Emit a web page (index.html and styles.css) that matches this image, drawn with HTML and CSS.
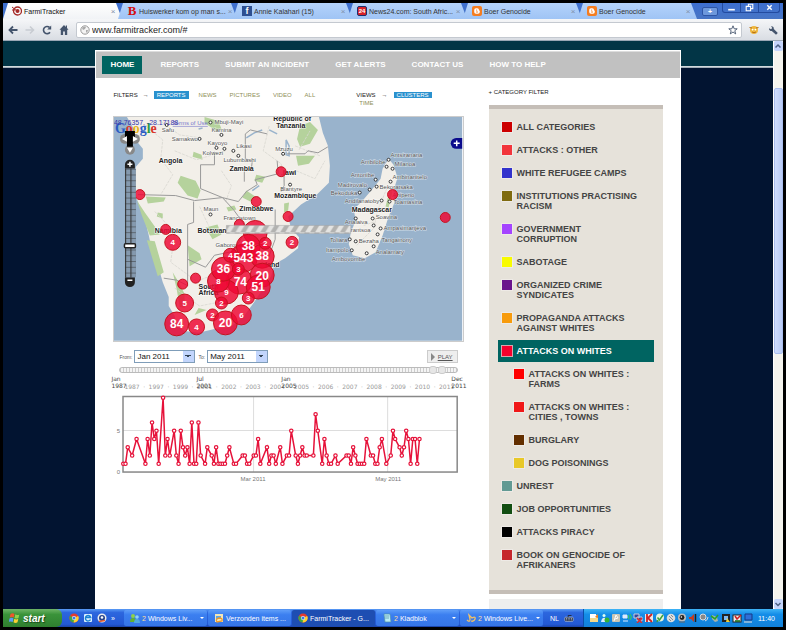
FILE: index.html
```html
<!DOCTYPE html>
<html lang="en">
<head>
<meta charset="utf-8">
<title>FarmiTracker</title>
<link rel="stylesheet" href="styles.css">
</head>
<body>
<svg class="defs" aria-hidden="true">
  <symbol id="chrome" viewBox="0 0 10 10"><circle cx="5" cy="5" r="4.6" fill="#e33b2e"/><path d="M5 5 1 2.8A4.6 4.6 0 0 0 4.7 9.6L7 6z" fill="#3fa648"/><path d="M5 5 9.2 3A4.6 4.6 0 0 1 4.7 9.6z" fill="#fbd232"/><circle cx="5" cy="5" r="2.1" fill="#fff"/><circle cx="5" cy="5" r="1.6" fill="#3b7de0"/></symbol>
  <symbol id="blogger" viewBox="0 0 10 10"><rect width="10" height="10" rx="2" fill="#f57d20"/><path d="M2.200 4A1.800 1.800 0 0 1 4 2.200h1.200A1.800 1.800 0 0 1 7 4q0 .7.8.8V6A1.800 1.800 0 0 1 6 7.800H4A1.800 1.800 0 0 1 2.200 6z" fill="#fff"/><path d="M4 4.100h1.200M4 6h2" stroke="#f57d20" stroke-width=".9"/></symbol>
  <symbol id="people" viewBox="0 0 10 10"><circle cx="3" cy="3" r="2" fill="#8fd14a"/><path d="M0 9q0-4 3-4t3 4z" fill="#62b22f"/><circle cx="7" cy="4" r="1.800" fill="#8fd4f5"/><path d="M4 10q0-4 3-4t3 4z" fill="#50a8df"/></symbol>
</svg>

<header class="browser">
  <div class="tabstrip">
    <div class="tab active">
      <svg class="fav" viewBox="0 0 10 10"><circle cx="5.500" cy="5" r="4" fill="none" stroke="#a52a28" stroke-width="1.300"/><circle cx="5.500" cy="5" r="2" fill="#a52a28"/><path d="M0 1l5 4M0 4h3" stroke="#a52a28"/></svg>
      <span class="tab-title">FarmiTracker</span><button class="x" aria-label="Close tab">×</button></div>
    <div class="tab"><span class="fav fav-b">B</span><span class="tab-title">Huiswerker kom op man s...</span><button class="x" aria-label="Close tab">×</button></div>
    <div class="tab"><span class="fav fav-f">f</span><span class="tab-title">Annie Kalahari (15)</span><button class="x" aria-label="Close tab">×</button></div>
    <div class="tab"><span class="fav fav-24">24</span><span class="tab-title">News24.com: South Afric...</span><button class="x" aria-label="Close tab">×</button></div>
    <div class="tab"><svg class="fav"><use href="#blogger"/></svg><span class="tab-title">Boer Genocide</span><button class="x" aria-label="Close tab">×</button></div>
    <div class="tab"><svg class="fav"><use href="#blogger"/></svg><span class="tab-title">Boer Genocide</span><button class="x" aria-label="Close tab">×</button></div>
    <button class="newtab" aria-label="New tab">+</button>
    <div class="winctl">
      <button aria-label="Minimise"><svg viewBox="0 0 10 8"><path d="M2 6h6" stroke="#fff" stroke-width="1.500"/></svg></button>
      <button aria-label="Restore"><svg viewBox="0 0 10 8"><path d="M4 2.500v-1.500h4v4H6.500M2 3h4v4H2z" stroke="#fff" fill="none"/></svg></button>
      <button aria-label="Close"><svg viewBox="0 0 10 8"><path d="M3 2l4 4M7 2l-4 4" stroke="#fff" stroke-width="1.300"/></svg></button>
    </div>
  </div>
  <div class="toolbar">
    <button aria-label="Back"><svg viewBox="0 0 10 10"><path d="M5 1.500 1.500 5 5 8.500M1.500 5h8" stroke="#44546c" stroke-width="1.800" fill="none"/></svg></button>
    <button aria-label="Forward"><svg viewBox="0 0 10 10"><path d="M5 1.500 8.500 5 5 8.500M8.500 5h-8" stroke="#c8ccd2" stroke-width="1.600" fill="none"/></svg></button>
    <button aria-label="Reload"><svg viewBox="0 0 10 10"><path d="M8 7.200A3.600 3.600 0 1 1 7.500 2.400" stroke="#44546c" stroke-width="1.600" fill="none"/><path d="M9.200.5v4h-4z" fill="#44546c"/></svg></button>
    <button aria-label="Home page"><svg viewBox="0 0 10 10"><path d="M5 0 .5 4.800h1.300V10h2.300V6.500h1.800V10h2.300V4.800h1.300L8 3V.5H6.800v1.400z" fill="#44546c"/></svg></button>
    <label class="address"><svg viewBox="0 0 10 10"><circle cx="5" cy="5" r="4.200" fill="#f4f4f4" stroke="#999"/><path d="M2 3q2-2 4-1L5 4 3 5zM6 5l2 0-1 3-1-1z" fill="#aaa"/></svg>
      <input type="text" value="www.farmitracker.com/#" aria-label="Address">
      <svg viewBox="0 0 10 10"><path d="M5 .8l1.200 3h3L6.800 5.700l.9 3.200L5 7 2.300 8.900l.9-3.200L.8 3.800h3z" fill="#fff" stroke="#44546c" stroke-width=".9"/></svg></label>
    <button aria-label="Extension"><svg viewBox="0 0 10 10"><circle cx="5" cy="5" r="4" fill="#efb73c"/><path d="M.5 2.500 3 3M9.500 2.500 7 3M3 7q2 1.500 4 0" stroke="#b66f18" fill="none"/><circle cx="3.600" cy="4.600" r=".9" fill="#fff"/><circle cx="6.400" cy="4.600" r=".9" fill="#fff"/></svg></button>
    <button aria-label="Settings"><svg viewBox="0 0 10 10"><path d="M3 1.200 4.300 3 3 4.300 1 3.200Q.8 6 3.800 6L8 9.800 9.800 8 5.800 4Q6 1 3 1.200z" fill="#44546c"/></svg></button>
  </div>
</header>

<div class="viewport">
<div class="page">
  <div class="wrapper">
    <nav class="mainnav">
      <a class="on" href="#">HOME</a><a href="#">REPORTS</a><a href="#">SUBMIT AN INCIDENT</a><a href="#">GET ALERTS</a><a href="#">CONTACT US</a><a href="#">HOW TO HELP</a>
    </nav>
    <div class="columns">
      <main>
        <div class="filters">
          <div class="filter-group"><strong>FILTERS</strong><span class="arrow">→</span><a class="on" href="#">REPORTS</a><a href="#">NEWS</a><a href="#">PICTURES</a><a href="#">VIDEO</a><a href="#">ALL</a></div>
          <div class="views"><strong>VIEWS</strong><span class="arrow">→</span><a class="on" href="#">CLUSTERS</a><br><a class="time" href="#">TIME</a></div>
        </div>
        <svg class="map" viewBox="113 116 350 225" role="img" aria-label="Map of southern Africa with incident clusters">
          <defs>
            <pattern id="stripes" width="10" height="8" patternUnits="userSpaceOnUse"><path d="M0 0h10v8H0z" fill="#e4e4e2"/><path d="M0 8 5 0h5L5 8z" fill="#b2b2b0"/></pattern>
            <pattern id="zoomgrid" x="124" y="168" width="5.500" height="5.800" patternUnits="userSpaceOnUse"><path d="M0 0h5.500v5.800H0z" fill="#8499ae"/><path d="M0 0h5.500M.5 0v6" stroke="#333" stroke-width="1.200"/></pattern>
          </defs>
          <path d="M113 116h350v225H113z" fill="#99b3cc"/>
          <path class="land" d="M126 116 133 128 134 138 142 148 142 158 135 166 133 180 134 194 139 206 144 218 148 235 151 250 158 268 162 282 168 297 168 306 174 316 176 326 184 331 198 333 214 329 230 327 243 317 254 302 263 288 271 276 274 264 285 258 298 248 299 237 291 228 288 216 301 204 317 194 329 182 330 165 328 145 323 132 319 116z"/>
          <path class="land" d="M389 158 394 164 398 177 394 190 395 202 389 216 383 235 376 252 365 258 353 255 349 244 351 232 356 220 354 209 363 200 373 188 381 178 383 168z"/>
          <path class="park" d="M180 175 195 180 200 190 197 198 187 195 177 182zM193 151l8 3 1 5-10-3zM204 116l14 4 3 8-5 2-12-8zM300 125l10-4 8 8-8 14-10 3-3-8zM296 155l19 0-6 8-11 2zM145 196l20 1-2 4-16 2zM136 200l8 12 10 14 5 8-10 1-8-20zM205 227l12-3 4 10-9 5zM187 245l12 8 2 6-12 7zM146 240l8 1 9 31-6 4zM172 272l6 10 6 12 0 14-5-1-3-18zM256 174l9 2-3 6-8-2zM246 190l9 6-5 5-8-4zM284 203l5-1-1 8-4 2zM390 190l3 1-4 16-3-1zM194 315l12-5-8-2zM157 212l5 1 0 5-6-2zM226 207l8-2 2 4-8 2z"/>
          <path class="road" d="M145 125 162 139 160 158 172 174 160 194M158 119 179 134 200 137M174 150 196 159 225 150M221 170 231 185 225 202M269 125 263 150 281 163 285 188M296 170 315 178 325 160M299 149 310 130M295 145l25 10M154 211 174 232 170 262 196 281 215 274M174 288 199 306 224 301M199 206 208 225M357 245 374 228 378 210 388 186M364 225l12-4"/>
          <path class="lake" d="M246 137 254 132 262 129M259 185 252 190M286 139l3 6 0 10-3-1zM269 129l8 4M198 128l4-1"/>
          <path class="border" d="M137 194 175 195 194 200 222 197 238 201M200 188 222 197M200 188V164h14v-13M222 197 233 209 244 224 260 232M238 201 246 191 257 184M245 133 250 129 267 133M245 133v25l7 2-1 9-7 1v11M257 184 255 179 278 173 277 160M287 153l18 0 3-3 10 2 10-6M281 174l3 0 0 11-3 6M193 201 193 222 187 224V286M163 278l13 2 10 5M187 259l18 8 9-12 19-4 9-15M275 209v30l-7 19"/>
          <g class="country"><text x="158" y="162">Angola</text><text x="229" y="170">Zambia</text><text x="239" y="210">Zimbabwe</text><text x="274" y="197">Mozambique</text><text x="154" y="233">Namibia</text><text x="197" y="233">Botswana</text><text x="352" y="212">Madagascar</text><text x="198" y="289">South</text><text x="198" y="295">Africa</text><text x="283" y="174">lawi</text><text x="273" y="120">Republic of</text><text x="276" y="127">Tanzania</text></g>
          <g class="town"><text x="214" y="123">Mbuji-Mayi</text><text x="211" y="131">Kamina</text><text x="161" y="131">Safu</text><text x="171" y="140">Samakwo</text><text x="207" y="144">Kayoyo</text><text x="202" y="154">Kolwezi</text><text x="236" y="147">Likasi</text><text x="223" y="161">Lubumbashi</text><text x="275" y="150">Mzuzu</text><text x="280" y="190">Blantyre</text><text x="203" y="211">Maun</text><text x="223" y="220">Francistown</text><text x="215" y="247">Gaborone</text>
          <text x="391" y="156">Antsiranana</text><text x="361" y="163">Ambilobe</text><text x="395" y="165">Milanoa</text><text x="351" y="176">Antonibe</text><text x="393" y="178">Ambinanitelo</text><text x="338" y="186">Madirovalo</text><text x="380" y="188">Bekoratsaka</text><text x="331" y="194">Bekoduka</text><text x="393" y="196">Ahipeno</text><text x="345" y="202">Andilanatoby</text><text x="394" y="203">Toamasina</text><text x="376" y="219">Soavina</text><text x="345" y="224">Analaiva</text><text x="384" y="230">Ampasimanjeva</text><text x="351" y="232">rantsoa</text><text x="330" y="242">Toliara</text><text x="359" y="243">Bezaha</text><text x="382" y="242">Tangainony</text><text x="326" y="252">Itampolo</text><text x="376" y="254">Analamary</text><text x="332" y="261">Ambovombe</text></g>
          <text class="country" x="265" y="267">land</text>
          <g class="dot"><circle cx="210" cy="121.500" r="1.500"/><circle cx="221" cy="134" r="1.500"/><circle cx="199" cy="138" r="1.500"/><circle cx="216" cy="147" r="1.500"/><circle cx="224" cy="148" r="1.500"/><circle cx="233" cy="150" r="1.500"/><circle cx="238" cy="155" r="1.500"/><circle cx="283" cy="153" r="1.500"/><circle cx="290" cy="184" r="1.500"/><circle cx="210" cy="214" r="1.500"/><circle cx="166" cy="124" r="1.500"/><circle cx="389" cy="159" r="1.500"/><circle cx="387" cy="166" r="1.500"/><circle cx="393" cy="168" r="1.500"/><circle cx="376" cy="179" r="1.500"/><circle cx="391" cy="181" r="1.500"/><circle cx="377" cy="186" r="1.500"/><circle cx="370" cy="189" r="1.500"/><circle cx="360" cy="192" r="1.500"/><circle cx="382" cy="200" r="1.500"/><circle cx="390" cy="201" r="1.500"/><circle cx="356" cy="218" r="1.500"/><circle cx="373" cy="218" r="1.500"/><circle cx="374" cy="225" r="1.500"/><circle cx="381" cy="228" r="1.500"/><circle cx="378" cy="234" r="1.500"/><circle cx="350" cy="239" r="1.500"/><circle cx="356" cy="241" r="1.500"/><circle cx="374" cy="246" r="1.500"/><circle cx="352" cy="250" r="1.500"/><circle cx="367" cy="253" r="1.500"/></g>
          <g class="cluster">
            <circle cx="139" cy="194" r="5"/><circle cx="165" cy="229" r="5"/><circle cx="281" cy="171" r="5"/><circle cx="256" cy="201" r="5"/><circle cx="288" cy="216" r="5"/><circle cx="239" cy="224" r="5"/><circle cx="393" cy="194" r="5"/><circle cx="446" cy="217" r="5"/><circle cx="182" cy="284" r="5"/><circle cx="195" cy="278" r="5"/>
            <circle cx="255" cy="232" r="12"/><circle cx="243" cy="258" r="14"/><circle cx="239" cy="281" r="13"/><circle cx="226" cy="292" r="12"/><circle cx="218" cy="281" r="11"/><circle cx="223" cy="269" r="12"/><circle cx="230" cy="255" r="7"/><circle cx="248" cy="246" r="12"/><circle cx="262" cy="256" r="12"/><circle cx="262" cy="275" r="12"/><circle cx="258" cy="287" r="12"/><circle cx="238" cy="269" r="6"/><circle cx="265" cy="243" r="6"/>
            <circle cx="172" cy="242" r="8"/><circle cx="292" cy="242" r="6"/><circle cx="184" cy="303" r="9"/><circle cx="176" cy="324" r="12"/><circle cx="196" cy="327" r="8"/><circle cx="212" cy="315" r="6"/><circle cx="221" cy="303" r="6"/><circle cx="225" cy="323" r="12"/><circle cx="241" cy="315" r="10"/><circle cx="248" cy="298" r="6"/>
          </g>
          <g class="count"><g class="big"><text x="248" y="250">38</text><text x="243" y="262">543</text><text x="262" y="260">38</text><text x="223" y="273">36</text><text x="240" y="286">74</text><text x="262" y="280">20</text><text x="258" y="291">51</text><text x="176" y="328">84</text><text x="225" y="327">20</text></g>
          <text x="218" y="284">8</text><text x="226" y="295">9</text><text x="230" y="258">4</text><text x="238" y="272">3</text><text x="265" y="246">2</text><text x="172" y="245">4</text><text x="292" y="245">2</text><text x="184" y="306">5</text><text x="196" y="330">4</text><text x="212" y="318">2</text><text x="221" y="306">2</text><text x="241" y="318">6</text><text x="248" y="301">3</text></g>
          <path d="M226 225h125v8H226z" fill="url(#stripes)" stroke="#a4a4a4" stroke-width=".5"/>
          <text class="google" x="114" y="132"><tspan fill="#2a5bc4">G</tspan><tspan fill="#d8352b">o</tspan><tspan fill="#e8b51c">o</tspan><tspan fill="#2a5bc4">g</tspan><tspan fill="#2f9c43">l</tspan><tspan fill="#d8352b">e</tspan></text>
          <text class="coords terms" x="172" y="124">Terms of Use</text><text class="coords" x="113" y="124">48.76357, -28.17188</text>
          <g fill="#888"><circle cx="124" cy="138" r="5"/><circle cx="134" cy="138" r="5"/><circle cx="129" cy="149" r="5"/></g><path d="M124 130h10v8h-2v8h-6v-8h-2z"/>
          <path d="M121 138l5-3v6zM137 138l-5-3v6zM129 152l-3-5h6z" fill="#fff"/>
          <path d="M124 168v-4a5 5 0 0 1 10 0v4zM124 277v5a5 5 0 0 0 10 0v-5z" fill="#222"/><path d="M126.500 163.500h5M129 161v5M126.500 280h5" stroke="#fff" stroke-width="1.500"/>
          <path d="M124 168h11v109h-11z" fill="url(#zoomgrid)"/><rect x="123.500" y="243.500" width="11" height="4" rx="1" fill="#fff" stroke="#222" stroke-width="1.500"/>
          <path d="M463 137h-6a5.500 5.500 0 0 0 0 11h6z" fill="#0a0a8c"/><path d="M454.500 142.500h6M457.500 139.500v6" stroke="#fff" stroke-width="1.500"/>
        </svg>

        <form class="range">
          <label for="from">From:</label><select id="from"><option>Jan 2011</option></select>
          <label for="to">To:</label><select id="to"><option>May 2011</option></select>
          <button type="button" class="play"><i></i><span>PLAY</span></button>
        </form>
        <div class="slider">
          <input type="range" max="1000" value="940" aria-label="Start month"><input type="range" max="1000" value="967" aria-label="End month">
        </div>
        <div class="scale">
          <div class="years"><span>1987</span><i>·</i><span>1997</span><i>·</i><span>1999</span><i>·</i><span>2001</span><i>·</i><span>2002</span><i>·</i><span>2003</span><i>·</i><span>2004</span><i>·</i><span>2005</span><i>·</i><span>2006</span><i>·</i><span>2007</span><i>·</i><span>2008</span><i>·</i><span>2009</span><i>·</i><span>2010</span><i>·</i><span>2011</span></div>
          <div class="marks"><span>Jan<br>1987</span><span>Jul<br>2001</span><span>Jan<br>2005</span><span></span><span>Dec<br>2011</span></div>
        </div>
        <svg class="chart" viewBox="113 394 350 92" role="img" aria-label="Reports per day, January to May 2011">
          <path class="grid" d="M123 431.500h334M253.500 397v76M387.500 397v76"/>
          <rect x="123" y="397.500" width="334" height="75.500"/>
          <polyline id="line"/><g id="points"></g>
          <text x="120" y="434" text-anchor="end">5</text><text x="120" y="475" text-anchor="end">0</text>
          <text x="253" y="482" text-anchor="middle">Mar 2011</text><text x="388" y="482" text-anchor="middle">May 2011</text>
        </svg>
      </main>

      <aside>
        <h2><a href="#">+ CATEGORY FILTER</a></h2>
        <ul class="cats">
          <li><a href="#"><i class="c1"></i>ALL CATEGORIES</a></li>
          <li><a href="#"><i class="c2"></i>ATTACKS : OTHER</a></li>
          <li><a href="#"><i class="c3"></i>WHITE REFUGEE CAMPS</a></li>
          <li><a href="#"><i class="c4"></i>INSTITUTIONS PRACTISING RACISM</a></li>
          <li><a href="#"><i class="c5"></i>GOVERNMENT<br>CORRUPTION</a></li>
          <li><a href="#"><i class="c6"></i>SABOTAGE</a></li>
          <li><a href="#"><i class="c7"></i>ORGANIZED CRIME<br>SYNDICATES</a></li>
          <li><a href="#"><i class="c8"></i>PROPAGANDA ATTACKS AGAINST WHITES</a></li>
          <li><a class="on" href="#"><i class="c9"></i>ATTACKS ON WHITES</a>
            <ul>
              <li><a href="#"><i class="c10"></i>ATTACKS ON WHITES :<br>FARMS</a></li>
              <li><a href="#"><i class="c11"></i>ATTACKS ON WHITES :<br>CITIES , TOWNS</a></li>
              <li><a href="#"><i class="c12"></i>BURGLARY</a></li>
              <li><a href="#"><i class="c13"></i>DOG POISONINGS</a></li>
            </ul></li>
          <li><a href="#"><i class="c14"></i>UNREST</a></li>
          <li><a href="#"><i class="c15"></i>JOB OPPORTUNITIES</a></li>
          <li><a href="#"><i class="c16"></i>ATTACKS PIRACY</a></li>
          <li><a href="#"><i class="c17"></i>BOOK ON GENOCIDE OF AFRIKANERS</a></li>
        </ul>
        <div class="next"></div>
      </aside>
    </div>
  </div>
</div>
<div class="scrollbar"><button aria-label="Scroll up"><svg viewBox="0 0 8 8"><path d="M1.500 5.500 4 3l2.500 2.500" fill="none" stroke="#4d6185" stroke-width="1.500"/></svg></button><div class="track"><div class="thumb"></div></div><button aria-label="Scroll down"><svg viewBox="0 0 8 8"><path d="M1.500 3 4 5.500 6.500 3" fill="none" stroke="#4d6185" stroke-width="1.500"/></svg></button></div>
</div>

<footer class="taskbar">
  <button class="start"><svg viewBox="0 0 12 12"><path d="M1.500 2q2-1.500 4 0l-.8 3.500q-2-1.200-4 0z" fill="#f0562b"/><path d="M6.300 2.300q2 1.300 4 .2l-.8 3.500q-2 1-4 0z" fill="#8fd14a"/><path d="M.5 6.500q2-1.300 4 0l-.8 3.500q-2-1.200-4 0z" fill="#5b9bf5"/><path d="M5.300 6.800q2 1.200 4 0l-.8 3.500q-2 1.200-4 0z" fill="#fbd232"/></svg>start</button>
  <div class="quick">
    <svg><use href="#chrome"/></svg>
    <svg viewBox="0 0 10 10"><rect x="1" y="1" width="8" height="8" rx="1" fill="#d9efff"/><path d="M7.500 6.500a2.700 2.700 0 1 1 .2-2H3" stroke="#1d83d4" stroke-width="1.400" fill="none"/></svg>
    <svg viewBox="0 0 10 10"><circle cx="5" cy="5" r="4.500" fill="#eee"/><circle cx="5" cy="5" r="3" fill="#28458c"/><path d="M2 8.500l6-1" stroke="#e55d2e" stroke-width="1.500"/><circle cx="5" cy="4.500" r="1.300" fill="#fff"/></svg>
    <span>»</span>
  </div>
  <button class="task"><svg><use href="#people"/></svg><b>2</b><span>Windows Liv...</span><i></i></button>
  <button class="task"><svg viewBox="0 0 10 10"><rect x="1" y="1" width="8" height="8" fill="#f3e6b8"/><path d="M2 3h5v3H2z" fill="#5aa4e8"/><path d="M3 9q-2-3 2-4 4 0 3 3z" fill="none" stroke="#ed9a2b" stroke-width="1.300"/></svg><span>Verzonden items ...</span></button>
  <button class="task on"><svg><use href="#chrome"/></svg><span>FarmiTracker - G...</span></button>
  <button class="task"><svg viewBox="0 0 10 10"><path d="M2 1h6l1 8H3z" fill="#b9ecf5" stroke="#4f91a8" stroke-width=".7"/><path d="M3 3h4M3 5h4" stroke="#4f91a8" stroke-width=".7"/></svg><b>2</b><span>Kladblok</span><i></i></button>
  <button class="task"><svg viewBox="0 0 10 10"><path d="M1 7q3 3 3-1l-1-4 3 3q4-2 3 1t-4 2" stroke="#f0c169" stroke-width="1.300" fill="none"/></svg><b>2</b><span>Windows Live...</span><i></i></button>
  <div class="lang">NL <svg viewBox="0 0 12 10"><rect x="1" y="4" width="10" height="5" rx="1" fill="#1d2a44" stroke="#d8d8d8" stroke-width=".7"/><path d="M2.500 5.500h7M2.500 7.200h7" stroke="#ddd" stroke-dasharray="1 1"/><path d="M5 4V2h4" stroke="#222" fill="none"/></svg></div>
  <div class="tray">
    <svg viewBox="0 0 10 10"><rect x="1" y="2" width="8" height="7" fill="#f5d98a"/><path d="M1 1h6v4H1z" fill="#fff"/><path d="M6 4l3-3v4z" fill="#eb7f25"/></svg>
    <svg viewBox="0 0 10 10"><circle cx="4" cy="2.500" r="1.500" fill="#dfe"/><path d="M1 9q1-5 4-4l2 4z" fill="#d7ecff"/><circle cx="7" cy="7" r="2.500" fill="#35b335"/></svg>
    <svg viewBox="0 0 10 10"><rect x="1" y="1" width="8" height="8" rx="1" fill="#c9c6b6"/><path d="M3 8 5 2l2 3-3 1" stroke="#fff" fill="none"/></svg>
    <svg viewBox="0 0 10 10"><path d="M1 2h4v3H1zM1 8h5" fill="#dceaff" stroke="#dceaff"/><path d="M6 2q2 2 0 4M8 1q3 3 0 6" stroke="#3fd148" fill="none"/></svg>
    <svg viewBox="0 0 10 10"><path d="M1 1h5v4H1zM4 4h5v4H4z" fill="#33499c" stroke="#ccd"/><path d="M4 5l5 5M9 5l-5 5" stroke="#e02b2b" stroke-width="1.500"/></svg>
    <svg viewBox="0 0 10 10"><rect x="1" y="1" width="8" height="8" fill="#e8e8e8"/><path d="M3 1v8M8 1 4 5l4 4" stroke="#d02323" stroke-width="1.800" fill="none"/></svg>
    <svg viewBox="0 0 10 10"><circle cx="5" cy="4.500" r="4" fill="#e5f3df"/><path d="M2.500 4.500 4.500 7 8 2M2 9l1-2" stroke="#3ca03c" stroke-width="1.500" fill="none"/></svg>
    <svg viewBox="0 0 10 10"><circle cx="5" cy="5" r="4.300" fill="#dcdcdc"/><path d="M3 3l4 4M3 6l2 2M5 2l2 2" stroke="#8c8c8c"/></svg>
    <svg viewBox="0 0 10 10"><circle cx="5" cy="4.500" r="4" fill="#bbb"/><circle cx="5" cy="4.500" r="2.400" fill="#222"/><circle cx="4.400" cy="4" r=".8" fill="#fff"/><path d="M2 9h6" stroke="#666"/></svg>
    <svg viewBox="0 0 10 10"><path d="M1 4h2l3-3v8L3 6H1z" fill="#c43c21"/><path d="M7.500 1v8" stroke="#222" stroke-width="1.500"/></svg>
    <svg viewBox="0 0 10 10"><circle cx="4" cy="4" r="3" fill="#888" stroke="#ddd"/><path d="M6 8q3-1 3-4" stroke="#ddd" fill="none"/></svg>
    <svg viewBox="0 0 10 10"><path d="M2 2l5 2 1 4-3 1-3-3z" fill="#a8b3a8"/><path d="M1 3l4 3 3-4" stroke="#29a329" stroke-width="1.600" fill="none"/></svg>
    <svg viewBox="0 0 10 10"><rect x="1" y="1" width="8" height="8" fill="#222"/><path d="M3 3h4v4H3z" fill="#7fb7ef"/><path d="M6 5l3 4H5z" fill="#f2cf32"/></svg>
    <svg viewBox="0 0 10 10"><rect x="1" y="2" width="8" height="7" fill="#eee" stroke="#222"/><path d="M3 3l2 3 4-4" stroke="#c22" stroke-width="1.500" fill="none"/><path d="M3 8h5" stroke="#161" stroke-width="1.500"/></svg>
    <svg viewBox="0 0 10 10"><path d="M2 1h7v6H2z" fill="#2f6fd8" stroke="#173a87"/><path d="M1 9h8" stroke="#bcd" stroke-width="1.300"/></svg>
    <time>11:40</time>
  </div>
</footer>
<script src="app.js"></script>
</body>
</html>
```
FILE: styles.css
```css
* { box-sizing: border-box; }
body { margin: 0; height: 100vh; padding: 3px; background: #000; display: flex; flex-direction: column; font-family: "Liberation Sans", Arial, sans-serif; font-size: 7px; overflow: hidden; }
button { border: 0; padding: 0; background: none; font: inherit; color: inherit; }
a { text-decoration: none; color: inherit; }
i { font-style: normal; }
ul { list-style: none; margin: 0; padding: 0; }
.defs { position: absolute; width: 0; height: 0; }

.browser { flex: none; }
.tabstrip { display: flex; height: 16px; background: linear-gradient(#3d6fd0, #4775c5); align-items: stretch; }
.tab { flex: 0 1 119px; min-width: 0; display: flex; align-items: center; gap: 2px; padding: 0 4px 0 9px; margin-right: -4px; background: linear-gradient(#b5d3fb, #9fc4f5); clip-path: polygon(0 100%, 5px 0, calc(100% - 6px) 0, 100% 100%); color: #333; }
.tab.active { background: linear-gradient(#fff, #f1f3f6); color: #111; }
.fav { width: 10px; height: 10px; flex: none; text-align: center; }
.fav-b { font: bold 13px/10px "Liberation Serif", serif; color: #d40f0f; }
.fav-f { background: #2d4f91; color: #fff; font: bold 9px/11px "Liberation Sans", sans-serif; }
.fav-24 { background: #d8232a; color: #fff; border: 1px solid #1c2f6e; border-radius: 2px; font-size: 6px; line-height: 8px; font-weight: bold; }
.tab-title { flex: 1; white-space: nowrap; }
.x { color: #7e8fa8; font-size: 8px; width: 6px; margin-right: 2px; }
.newtab { width: 16px; height: 9px; margin: 4px 0 0 9px; border: 1px solid #2d55a5; background: #6d98dc; color: #fff; font-weight: bold; line-height: 7px; border-radius: 2px; flex: none; }
.winctl { margin-left: auto; display: flex; height: 10px; border: 1px solid #234b9f; border-top: 0; border-radius: 0 0 3px 3px; margin-right: 3px; flex: none; }
.winctl button { width: 18px; border-right: 1px solid #234b9f; display: flex; align-items: center; justify-content: center; }
.winctl button:last-child { border: 0; width: 20px; }
.winctl svg { width: 11px; height: 9px; }
.toolbar { height: 22px; display: flex; align-items: center; gap: 7px; padding: 0 5px; background: linear-gradient(#f5f6f8, #d9dde3); border-bottom: 1px solid #9aa7b5; }
.toolbar svg { width: 10px; height: 10px; display: block; flex: none; }
.address { flex: 1; height: 16px; display: flex; align-items: center; gap: 2px; padding: 0 3px; background: #fff; border: 1px solid #c4c9d0; border-radius: 2px; }
.address input { flex: 1; min-width: 0; border: 0; padding: 0; font: 9px "Liberation Sans", sans-serif; color: #222; background: none; }
.toolbar > button:last-child { margin-left: 2px; }

.viewport { flex: 1; min-height: 0; display: flex; }
.page { flex: 1; min-width: 0; overflow: hidden; background: linear-gradient(#023546 25px, #e8eef0 25px, #8d9aa5 27px, #021431 27px); padding-top: 9px; }
.wrapper { width: 76%; min-height: 100%; margin: 0 auto; background: #fff; padding: 1px; }
.mainnav { display: flex; align-items: center; height: 27px; padding-left: 6px; gap: 10px; background: #c1c1c1; border-top: 1px solid #ddd; color: #fff; font-size: 8px; font-weight: bold; }
.mainnav a { padding: 0 8px; line-height: 18px; white-space: nowrap; }
.mainnav .on { background: #006461; }
.columns { display: grid; grid-template-columns: minmax(0, 1fr) 174px; gap: 25px; padding: 0 17px; }

.filters { display: flex; justify-content: space-between; height: 38px; padding: 13px 32px 0 0; font-size: 6px; line-height: 8px; }
.filters strong { font-weight: normal; color: #222; }
.filters a { color: #8f8f58; }
.filters .on { background: #2a91ce; color: #fff; padding: 0 3px; }
.filter-group { display: flex; gap: 13px; align-items: flex-start; }
.filter-group .on { margin-left: -8px; }
.filter-group .arrow { margin-left: -8px; }
.filter-group .on + a { margin-left: -3px; }
.arrow { font-weight: bold; color: #222; }
.views .arrow { margin: 0 6px; }
.views .time { margin-left: 3px; }

.map { display: block; width: 100%; border: 1px solid #ccc; font-size: 7px; }
.land { fill: #f2efe9; }
.park { fill: #b5d29c; }
.road { fill: none; stroke: #d8d6d0; stroke-width: .8; stroke-dasharray: 3 1; }
.lake { fill: none; stroke: #99b3cc; stroke-width: 1.500; }
.border { fill: none; stroke: #999; stroke-width: 1; }
.country { font-weight: bold; fill: #222; stroke: #fff; stroke-width: 1px; paint-order: stroke; }
.town { font-size: 6px; fill: #555; stroke: #fff; stroke-opacity: .6; stroke-width: 1px; paint-order: stroke; }
.dot { fill: #fff; stroke: #333; stroke-width: 1; }
.cluster { fill: #ee0834; fill-opacity: .84; stroke: #c4131f; stroke-width: 1; }
.count { fill: #fff; font-weight: bold; font-size: 8px; text-anchor: middle; }
.big { font-size: 12px; }
.coords { font-size: 7px; fill: #33a; }
.terms { fill: #77c; text-decoration: underline; font-size: 6px; }
.google { font: bold 14px "Liberation Serif", serif; }

.range { display: flex; align-items: center; height: 12px; margin: 9px 6px 0; font-size: 5px; color: #555; }
.range select { appearance: none; height: 13px; width: 61px; margin: 0 3px 0 2px; padding: 0 0 0 2px; border: 1px solid #7f9db9; border-radius: 0; font: 8px "Liberation Sans", sans-serif; color: #111; background: linear-gradient(45deg, transparent 50%, #345 50%) right 6px center / 3px 3px no-repeat, linear-gradient(-45deg, transparent 50%, #345 50%) right 3px center / 3px 3px no-repeat, linear-gradient(#c2d5fc, #c2d5fc) right / 11px 100% no-repeat, #fff; }
.play { margin-left: auto; height: 13px; padding: 0 4px 0 3px; display: flex; align-items: center; gap: 3px; background: #eee; border: 1px solid #ccc; font-size: 6px; color: #555; }
.play i { border: 4px solid transparent; border-left-color: #888; border-right: 0; }
.play span { text-decoration: underline; }
.slider { position: relative; height: 6px; margin: 4px 6px 0; border: 1px solid #bbb; border-radius: 3px; background: repeating-linear-gradient(90deg, #ccc 0 1px, #f4f4f4 1px 3px); }
.slider input { position: absolute; inset: -2px 0; width: 100%; margin: 0; height: 8px; appearance: none; background: none; pointer-events: none; }
.slider input::-webkit-slider-thumb { appearance: none; width: 8px; height: 8px; border-radius: 3px; background: #e6e6e6; border: 1px solid #ccc; pointer-events: auto; }
.scale { position: relative; height: 20px; font: 6px/8px "DejaVu Sans", sans-serif; padding-top: 10px; }
.years { display: flex; justify-content: space-between; color: #999; padding: 0 9px 0 11px; }
.marks { position: absolute; top: 2px; left: -2px; right: -3px; display: grid; grid-template-columns: repeat(4, 1fr) auto; line-height: 7px; color: #444; }
.chart { display: block; width: 100%; font-size: 6px; }
.chart text { fill: #777; }
.chart rect { fill: none; stroke: #888; stroke-width: 1.500; }
.grid { stroke: #ddd; stroke-width: 1; }
.chart polyline { fill: none; stroke: #e6123a; stroke-width: 1.500; }
.chart circle { fill: #fff; stroke: #e6123a; stroke-width: 1.200; }

aside h2 { margin: 0; padding: 10px 0 9px; font-size: 6px; line-height: 8px; font-weight: normal; color: #222; }
.cats { padding: 7px 9px 13px; background: #e6e2da; border: solid #c5beb7; border-width: 4px 0; font-size: 9px; line-height: 10px; font-weight: bold; color: #444; }
.cats ul { padding-left: 12px; }
.cats a { display: block; position: relative; padding: 6px 4px 6px 19px; margin-bottom: 1px; }
.cats a i { position: absolute; left: 3px; top: 5px; width: 12px; height: 12px; border: 1px solid #eeeae6; }
.cats .on { background: #006461; color: #fff; }
.cats .on i { border-color: #d9a5ac; }
.c1 { background: #c00; } .c2 { background: #f2353c; } .c3 { background: #3232cc; } .c4 { background: #7f6b10; } .c5 { background: #a544ff; } .c6 { background: #f8fb00; }
.c7 { background: #6a148c; } .c8 { background: #f79b0c; } .c9 { background: #f6002c; } .c10 { background: #f00; } .c11 { background: #f01818; } .c12 { background: #632f00; }
.c13 { background: #e8c828; } .c14 { background: #629a94; } .c15 { background: #124e12; } .c16 { background: #000; } .c17 { background: #c6272c; }
.next { margin-top: 5px; height: 40px; background: #eee; }

.scrollbar { flex: none; width: 10px; display: flex; flex-direction: column; background: #f5f4ee; border-left: 1px solid #fff; }
.scrollbar button { height: 10px; background: #c4d4fb; border-radius: 2px; }
.scrollbar svg { width: 8px; height: 8px; display: block; }
.track { flex: 1; padding-top: 37px; }
.thumb { height: 52%; background: linear-gradient(90deg, #cfddfe, #b9cbf5); border: 1px solid #a9bdee; border-radius: 2px; }

.taskbar { flex: none; height: 18px; display: flex; background: linear-gradient(#5a9bf5, #2c66de 20%, #2359d4 85%, #1b43a6); color: #fff; }
.taskbar svg { width: 10px; height: 10px; flex: none; }
.start { width: 59px; display: flex; align-items: center; gap: 2px; padding-left: 6px; background: linear-gradient(#6fb567, #3a933a 30%, #2f7f2f); border-radius: 0 6px 6px 0; font: italic bold 10px "Liberation Sans", sans-serif; text-shadow: 1px 1px 1px #184818; }
.start svg { width: 12px; height: 12px; }
.quick { width: 62px; display: flex; align-items: center; gap: 4px; padding-left: 7px; }
.task { flex: 0 1 83px; min-width: 0; display: flex; align-items: center; gap: 2px; padding: 0 3px 0 6px; margin: 1px 1px 1px 0; background: linear-gradient(#5e9df8, #3b7ff0 30%, #3675e6); border-radius: 2px; white-space: nowrap; }
.task span { flex: 1; text-align: left; }
.task b { color: #ffdf9c; font-weight: normal; }
.task i { border: 2px solid transparent; border-top-color: #fff; border-bottom: 0; }
.task.on { background: #1e4eb2; }
.lang { display: flex; align-items: center; gap: 5px; padding: 0 6px; }
.tray { margin-left: auto; flex: none; display: flex; align-items: center; gap: 1px; padding: 0 8px 0 5px; background: linear-gradient(#3fb4f6, #148de8 30%, #1280d8); border-left: 1px solid #0c4fa8; }
.tray time { margin-left: 4px; }
```
FILE: app.js
```js
// Reports per day, as [day since 1 January, count]
const reports = [[0,1],[1,1],[2,3],[4,2],[6,4],[10,1],[11,4],[12,2],[13,6],[14,4],[15,5],[16,1],[18,9],[19,2],[20,4],[21,2],[23,5],[24,2],[25,1],[26,5],[27,3],[28,2],[29,3],[30,1],[31,6],[32,1],[33,1],[34,6],[35,2],[37,1],[38,3],[40,2],[41,1],[42,3],[43,1],[44,1],[45,1],[46,1],[47,2],[48,3],[50,1],[51,1],[54,2],[55,2],[56,1],[57,1],[59,2],[60,2],[61,4],[62,1],[65,3],[66,1],[67,2],[68,2],[69,1],[71,3],[72,1],[74,2],[75,2],[76,5],[78,2],[79,1],[80,2],[81,3],[82,2],[83,2],[86,2],[87,7],[88,5],[90,1],[91,4],[92,2],[93,1],[94,1],[96,2],[97,1],[101,2],[102,2],[103,1],[104,3],[105,2],[106,1],[107,1],[108,1],[109,1],[110,4],[112,2],[113,2],[114,1],[115,1],[116,3],[117,4],[119,1],[121,2],[122,5],[123,4],[125,3],[126,2],[127,3],[128,5],[129,4],[130,1],[131,4],[132,4],[133,1],[134,4]];
const points = reports.map(([day, n]) => [123.3 + day * 2.209, 473 - n * 8.25]);
document.getElementById("line").setAttribute("points", points.join(" "));
document.getElementById("points").innerHTML = points.map(([x, y]) => `<circle cx="${x}" cy="${y}" r="1.7"/>`).join("");
```
